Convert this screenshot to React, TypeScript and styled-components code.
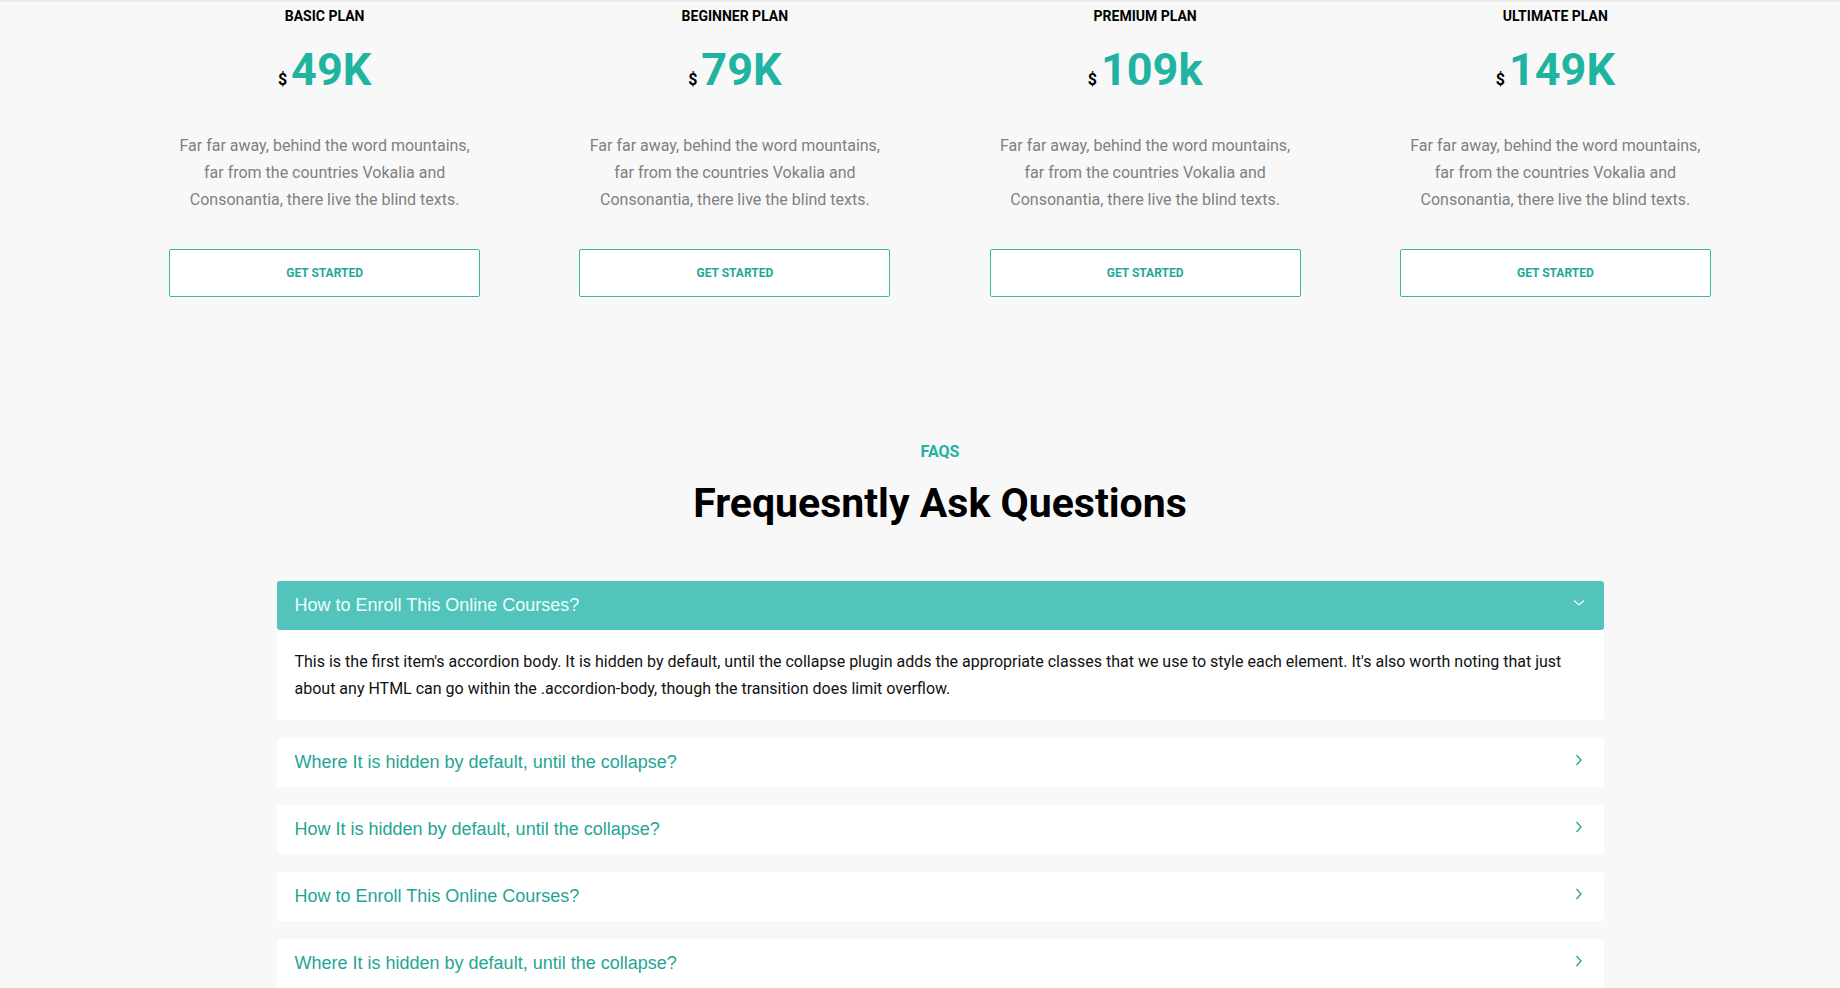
import React from "react";
import styled, { createGlobalStyle } from "styled-components";

const Global = createGlobalStyle`
  html, body { margin: 0; padding: 0; background: #f8f8f8; }
  body { font-family: Roboto, "Liberation Sans", Arial, sans-serif; }
  * { box-sizing: border-box; }
`;

const Page = styled.div`
  width: 1840px;
  min-height: 988px;
  background: #f8f8f8;
  overflow: hidden;
`;

const TopStrip = styled.div`
  height: 2px;
  background: #ebebeb;
`;

const Content = styled.div`
  padding-left: 40px;
  display: flex;
  flex-direction: column;
  align-items: center;
`;

const PricingGrid = styled.section`
  width: 1641px;
  display: grid;
  grid-template-columns: repeat(4, minmax(0, 1fr));
  padding-top: 4px;
`;

const PlanCol = styled.div`
  display: flex;
  flex-direction: column;
  align-items: center;
  text-align: center;
`;

const PlanName = styled.h3`
  margin: 0;
  font-family: Roboto, sans-serif;
  font-size: 14px;
  line-height: 20px;
  font-weight: 700;
  color: #000;
  text-transform: uppercase;
`;

const Price = styled.div`
  margin-top: 21px;
  display: flex;
  align-items: baseline;
  font-family: Roboto, sans-serif;
  line-height: 45px;
  height: 45px;
`;

const Currency = styled.span`
  font-size: 16px;
  font-weight: 700;
  color: #000;
  margin-right: 4px;
`;

const Amount = styled.span`
  font-size: 45px;
  font-weight: 700;
  color: #20b3a1;
`;

const Desc = styled.p`
  margin: 40px 0 0;
  font-family: Roboto, sans-serif;
  font-size: 16px;
  line-height: 27px;
  color: #808080;
  width: 310px;
`;

const StartButton = styled.button`
  margin-top: 36px;
  width: 311px;
  height: 48px;
  background: #fff;
  border: 1px solid #3db5a9;
  border-radius: 2px;
  color: #1fa898;
  font-family: Roboto, sans-serif;
  font-size: 12px;
  font-weight: 700;
  text-transform: uppercase;
  cursor: pointer;
`;

const FaqSection = styled.section`
  margin-top: 143px;
  display: flex;
  flex-direction: column;
  align-items: center;
`;

const Kicker = styled.div`
  font-family: Roboto, sans-serif;
  font-size: 16px;
  line-height: 24px;
  font-weight: 700;
  color: #20b3a1;
`;

const Title = styled.h2`
  margin: 15px 0 0;
  font-family: Roboto, sans-serif;
  font-size: 41px;
  line-height: 48px;
  font-weight: 700;
  color: #000;
`;

const Accordion = styled.div`
  margin-top: 54px;
  width: 1327px;
  display: flex;
  flex-direction: column;
  gap: 18px;
`;

const Item = styled.div`
  background: #fff;
  border-radius: 3px;
`;

const Header = styled.div<{ $open?: boolean }>`
  height: 49px;
  display: flex;
  align-items: center;
  justify-content: space-between;
  padding: 0 18px;
  background: ${(p) => (p.$open ? "#53c4bb" : "#fff")};
  border-radius: 3px;
  font-family: "Liberation Sans", Arial, sans-serif;
  font-size: 18px;
  color: ${(p) => (p.$open ? "#eafffb" : "#1fa595")};
  cursor: pointer;
`;

const Icon = styled.svg`
  width: 12px;
  height: 12px;
  margin-bottom: 6px;
  margin-right: 1px;
  flex: none;
`;

const Body = styled.div`
  padding: 18px 18px 18px;
  font-family: Roboto, sans-serif;
  font-size: 16px;
  line-height: 27px;
  color: #111;
`;

const plans = [
  { name: "Basic Plan", price: "49K" },
  { name: "Beginner Plan", price: "79K" },
  { name: "Premium Plan", price: "109k" },
  { name: "Ultimate Plan", price: "149K" },
];

const faqs = [
  "How to Enroll This Online Courses?",
  "Where It is hidden by default, until the collapse?",
  "How It is hidden by default, until the collapse?",
  "How to Enroll This Online Courses?",
  "Where It is hidden by default, until the collapse?",
];

const Chevron = ({ open }: { open: boolean }) => (
  <Icon viewBox="0 0 12 12" fill="none">
    {open ? (
      <polyline points="1,3.5 6,8 11,3.5" stroke="#eafffb" strokeWidth="1.3" />
    ) : (
      <polyline points="3.5,1 8,6 3.5,11" stroke="#1fa595" strokeWidth="1.3" />
    )}
  </Icon>
);

export default function App() {
  return (
    <Page>
      <Global />
      <TopStrip />
      <Content>
        <PricingGrid>
          {plans.map((p) => (
            <PlanCol key={p.name}>
              <PlanName>{p.name}</PlanName>
              <Price>
                <Currency>$</Currency>
                <Amount>{p.price}</Amount>
              </Price>
              <Desc>
                Far far away, behind the word mountains, far from the countries
                Vokalia and Consonantia, there live the blind texts.
              </Desc>
              <StartButton>Get Started</StartButton>
            </PlanCol>
          ))}
        </PricingGrid>
        <FaqSection>
          <Kicker>FAQS</Kicker>
          <Title>Frequesntly Ask Questions</Title>
          <Accordion>
            {faqs.map((q, i) => (
              <Item key={i}>
                <Header $open={i === 0}>
                  <span>{q}</span>
                  <Chevron open={i === 0} />
                </Header>
                {i === 0 && (
                  <Body>
                    This is the first item's accordion body. It is hidden by
                    default, until the collapse plugin adds the appropriate
                    classes that we use to style each element. It's also worth
                    noting that just about any HTML can go within the
                    .accordion-body, though the transition does limit overflow.
                  </Body>
                )}
              </Item>
            ))}
          </Accordion>
        </FaqSection>
      </Content>
    </Page>
  );
}
